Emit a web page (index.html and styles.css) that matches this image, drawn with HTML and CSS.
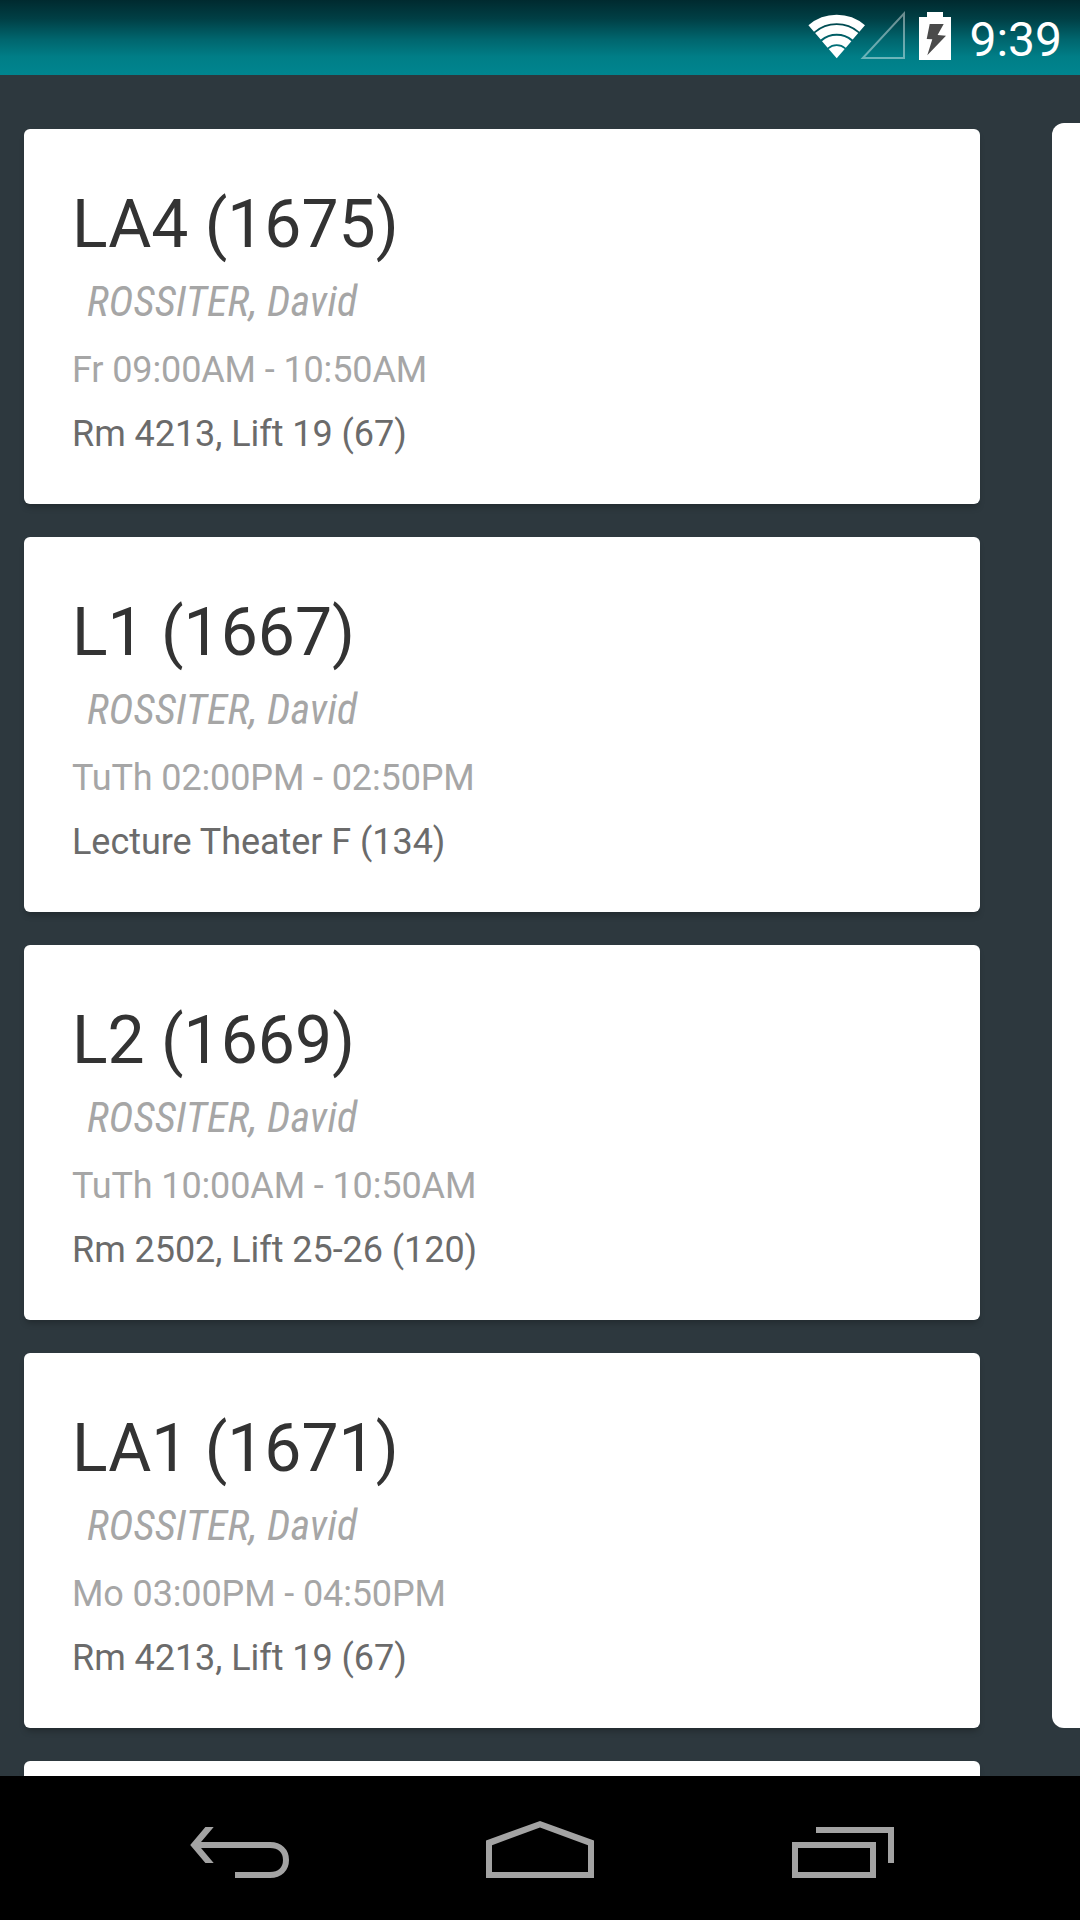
FILE: index.html
```html
<!DOCTYPE html>
<html lang="en">
<head>
  <meta charset="UTF-8">
  <title>Course sections</title>
  <link rel="stylesheet" href="styles.css">
</head>
<body>
  <header class="status-bar">
    <svg class="wifi" width="60" height="60" viewBox="0 0 60 60">
      <g fill="none" stroke="#fff" stroke-width="8.6">
        <path d="M4.2 28.4A39.3 39.3 0 0 1 55.2 28.4"/>
        <path d="M10.9 36.3A29 29 0 0 1 48.5 36.3"/>
        <path d="M17.8 44.4A18.3 18.3 0 0 1 41.6 44.4"/>
      </g>
      <path d="M21.7 49A12.3 12.3 0 0 1 37.7 49L29.7 58.3Z" fill="#fff"/>
    </svg>
    <svg class="signal" width="46" height="60" viewBox="0 0 46 60">
      <path d="M3.8 58H45V13.5Z" fill="none" stroke="#fff" stroke-opacity="0.42" stroke-width="2"/>
    </svg>
    <svg class="battery" width="32" height="60" viewBox="0 0 32 60">
      <path d="M8 12H24V17H32V60H0V17H8Z" fill="#fff"/>
      <path d="M10.7 24H24.7L18.6 35L27 35.7L8.3 55.3L13.3 39.3L7.7 39Z" fill="#4a4a4a"/>
    </svg>
    <span class="clock">9:39</span>
  </header>

  <main class="pager">
    <section class="sections">
      <article class="card">
        <h2>LA4 (1675)</h2>
        <p class="teacher">ROSSITER, David</p>
        <p class="time">Fr 09:00AM - 10:50AM</p>
        <p class="room">Rm 4213, Lift 19 (67)</p>
      </article>
      <article class="card">
        <h2>L1 (1667)</h2>
        <p class="teacher">ROSSITER, David</p>
        <p class="time">TuTh 02:00PM - 02:50PM</p>
        <p class="room">Lecture Theater F (134)</p>
      </article>
      <article class="card">
        <h2>L2 (1669)</h2>
        <p class="teacher">ROSSITER, David</p>
        <p class="time">TuTh 10:00AM - 10:50AM</p>
        <p class="room">Rm 2502, Lift 25-26 (120)</p>
      </article>
      <article class="card">
        <h2>LA1 (1671)</h2>
        <p class="teacher">ROSSITER, David</p>
        <p class="time">Mo 03:00PM - 04:50PM</p>
        <p class="room">Rm 4213, Lift 19 (67)</p>
      </article>
      <article class="card"></article>
    </section>
    <section class="next-page"></section>
  </main>

  <nav class="nav-bar">
    <button type="button" aria-label="Back">
      <svg width="120" height="144" viewBox="0 0 120 144">
        <path d="M10.2 69L25.4 51H33.7L18.5 69L33.7 87H25.4Z" fill="#a3a3a3"/>
        <path d="M16 69H90C100 69 106 75 106 84S100 99 90 99H55" fill="none" stroke="#a3a3a3" stroke-width="6"/>
      </svg>
    </button>
    <button type="button" aria-label="Home">
      <svg width="120" height="144" viewBox="0 0 120 144">
        <path d="M6 64.5L60 45L114 64.5V102H6ZM12 69.2V96H108V69.2L60 51.6Z" fill="#a3a3a3" fill-rule="evenodd"/>
      </svg>
    </button>
    <button type="button" aria-label="Recent apps">
      <svg width="120" height="144" viewBox="0 0 120 144">
        <path d="M15 69H93V99H15ZM36 54H111V87" fill="none" stroke="#a3a3a3" stroke-width="6"/>
      </svg>
    </button>
  </nav>
</body>
</html>
```
FILE: styles.css
```css
* {
  box-sizing: border-box;
}
body {
  margin: 0;
  height: 1920px;
  display: flex;
  flex-direction: column;
  overflow: hidden;
  background-color: #2d383e;
  font-family: Roboto, sans-serif;
}
h2, p {
  margin: 0;
  white-space: nowrap;
}

/* status bar */
.status-bar {
  height: 75px;
  flex: none;
  display: flex;
  justify-content: flex-end;
  padding-right: 18px;
  background: linear-gradient(#002a2f, #003f45 25%, #00656d 52%, #007e87 76%, #00858f);
}
.wifi {
  margin-right: -8px;
}
.signal {
  margin-right: 14px;
}
.clock {
  width: 93px;
  margin-left: 18px;
  font-size: 48px;
  line-height: 80px;
  text-align: right;
  color: #fff;
}

/* pages */
.pager {
  flex: 1;
  min-height: 0;
  display: flex;
  overflow: hidden;
  padding-left: 24px;
}
.sections {
  width: 956px;
  flex: none;
  padding-top: 54px;
}
.card {
  height: 375px;
  margin-bottom: 33px;
  padding: 57px 48px 0;
  border-radius: 6px;
  background-color: #fff;
  box-shadow: 0 5px 6px -2px rgba(0, 0, 0, 0.25);
}
.card h2 {
  font-size: 66px;
  font-weight: 400;
  line-height: 78px;
  color: #333;
}
.teacher {
  margin-top: 13px;
  padding-left: 15px;
  font-family: "Roboto Condensed", Roboto, sans-serif;
  font-stretch: 75%;
  font-style: italic;
  font-size: 42px;
  line-height: 50px;
  letter-spacing: 0.15px;
  color: #a6a6a6;
}
.time, .room {
  margin-top: 22px;
  font-size: 36px;
  line-height: 42px;
}
.time {
  letter-spacing: -0.12px;
  color: #a6a6a6;
}
.room {
  letter-spacing: -0.05px;
  color: #6b6b6b;
}
.next-page {
  width: 956px;
  flex: none;
  height: 1605px;
  margin: 48px 0 0 72px;
  border-radius: 12px;
  background-color: #fff;
}

/* system buttons */
.nav-bar {
  height: 144px;
  flex: none;
  display: flex;
  justify-content: center;
  background-color: #000;
}
.nav-bar button {
  width: 300px;
  padding: 0;
  border: none;
  background: none;
}
.nav-bar svg {
  display: block;
  margin: 0 auto;
}
```
